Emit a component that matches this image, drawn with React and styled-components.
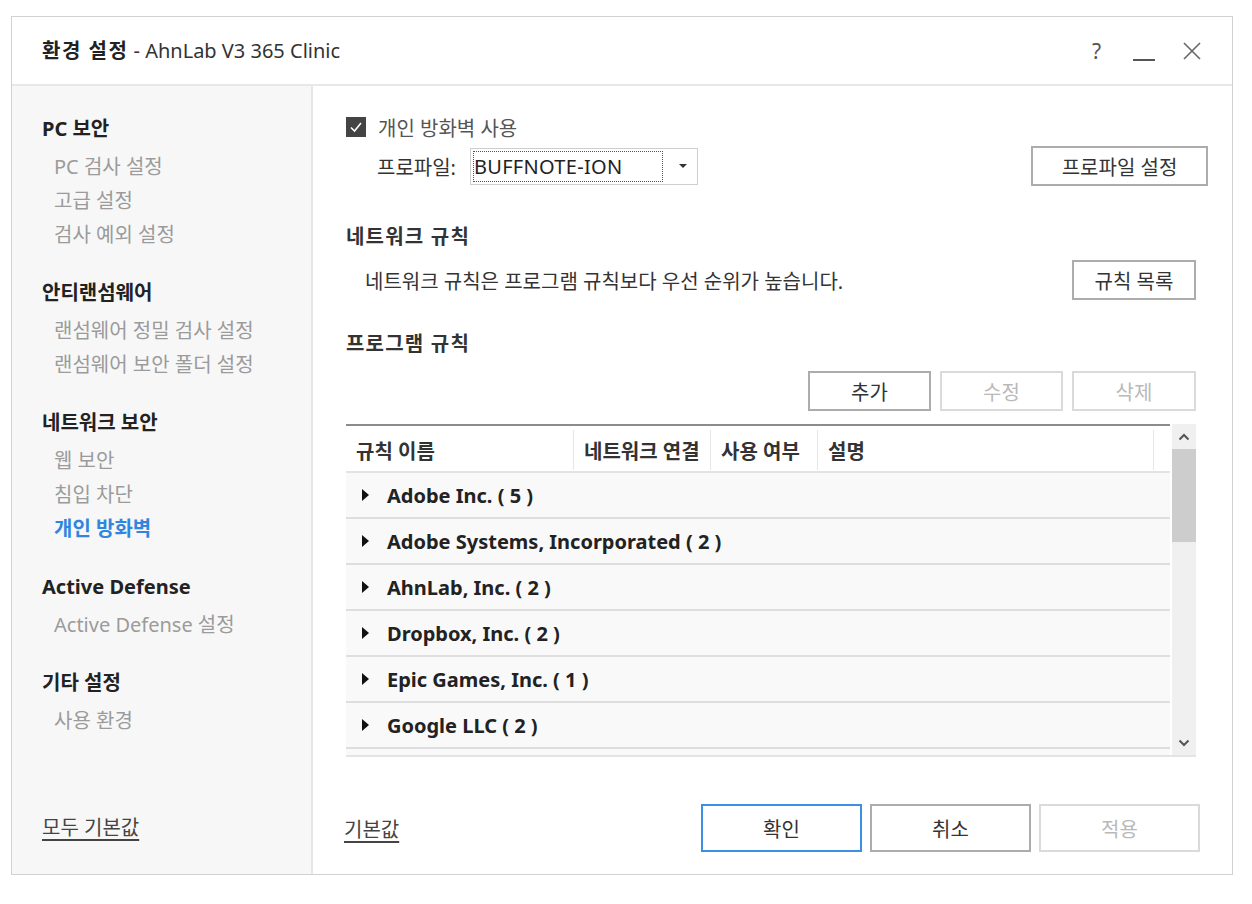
import React from 'react';
import styled, { createGlobalStyle } from 'styled-components';

const GlobalStyle = createGlobalStyle`
  html, body {
    margin: 0;
    padding: 0;
    background: #fff;
  }
  body {
    font-family: "Noto Sans", "Noto Sans CJK KR", sans-serif;
    color: #333;
  }
`;

const menu = [
  { title: 'PC 보안', items: ['PC 검사 설정', '고급 설정', '검사 예외 설정'] },
  { title: '안티랜섬웨어', items: ['랜섬웨어 정밀 검사 설정', '랜섬웨어 보안 폴더 설정'] },
  { title: '네트워크 보안', items: ['웹 보안', '침입 차단', '개인 방화벽'] },
  { title: 'Active Defense', items: ['Active Defense 설정'] },
  { title: '기타 설정', items: ['사용 환경'] },
];

const rules = [
  'Adobe Inc. ( 5 )',
  'Adobe Systems, Incorporated ( 2 )',
  'AhnLab, Inc. ( 2 )',
  'Dropbox, Inc. ( 2 )',
  'Epic Games, Inc. ( 1 )',
  'Google LLC ( 2 )',
];

const columns = [
  { label: '규칙 이름', width: 228 },
  { label: '네트워크 연결', width: 137 },
  { label: '사용 여부', width: 107 },
  { label: '설명', width: 336 },
];

const App = () => (
  <Page>
    <GlobalStyle />
    <Window>
      <TitleBar>
        <Title>
          <strong>환경 설정</strong> - AhnLab V3 365 Clinic
        </Title>
        <TitleControls>
          <HelpMark>?</HelpMark>
          <MinimizeBar />
          <svg width="18" height="18" viewBox="0 0 18 18">
            <path d="M1 1 L17 17 M17 1 L1 17" stroke="#666" strokeWidth="1.6" />
          </svg>
        </TitleControls>
      </TitleBar>

      <Body>
        <Sidebar>
          {menu.map((group) => (
            <MenuGroup key={group.title}>
              <MenuTitle>{group.title}</MenuTitle>
              {group.items.map((item) => (
                <MenuItem key={item} active={item === '개인 방화벽'}>
                  {item}
                </MenuItem>
              ))}
            </MenuGroup>
          ))}
          <SidebarFooter>
            <LinkText>모두 기본값</LinkText>
          </SidebarFooter>
        </Sidebar>

        <Main>
          <CheckRow>
            <CheckBox>
              <svg width="16" height="16" viewBox="0 0 16 16">
                <path d="M3 8.5 L6.5 12 L13 4" stroke="#fff" strokeWidth="1.6" fill="none" />
              </svg>
            </CheckBox>
            <CheckLabel>개인 방화벽 사용</CheckLabel>
          </CheckRow>

          <ProfileRow>
            <ProfileField>
              <FieldLabel>프로파일:</FieldLabel>
              <Select>
                <SelectValue>BUFFNOTE-ION</SelectValue>
                <SelectArrow />
              </Select>
            </ProfileField>
            <Button width={177}>프로파일 설정</Button>
          </ProfileRow>

          <SectionTitle top={36}>네트워크 규칙</SectionTitle>
          <DescRow>
            <Description>네트워크 규칙은 프로그램 규칙보다 우선 순위가 높습니다.</Description>
            <Button width={124}>규칙 목록</Button>
          </DescRow>

          <SectionTitle top={29}>프로그램 규칙</SectionTitle>
          <ActionRow>
            <Button width={123}>추가</Button>
            <Button width={123} disabled>수정</Button>
            <Button width={124} disabled>삭제</Button>
          </ActionRow>

          <Table>
            <ListArea>
              <HeaderRow>
                {columns.map((col) => (
                  <HeaderCell key={col.label} width={col.width}>
                    {col.label}
                  </HeaderCell>
                ))}
              </HeaderRow>
              <Rows>
                {rules.map((rule) => (
                  <RuleRow key={rule}>
                    <Caret />
                    <RuleName>{rule}</RuleName>
                  </RuleRow>
                ))}
                <RuleRow />
              </Rows>
            </ListArea>
            <ScrollBar>
              <ScrollButton>
                <svg width="12" height="8" viewBox="0 0 12 8">
                  <path d="M1.5 6.5 L6 2 L10.5 6.5" stroke="#555" strokeWidth="2" fill="none" />
                </svg>
              </ScrollButton>
              <ScrollTrack>
                <ScrollThumb />
              </ScrollTrack>
              <ScrollButton>
                <svg width="12" height="8" viewBox="0 0 12 8">
                  <path d="M1.5 1.5 L6 6 L10.5 1.5" stroke="#555" strokeWidth="2" fill="none" />
                </svg>
              </ScrollButton>
            </ScrollBar>
          </Table>

          <Footer>
            <LinkText>기본값</LinkText>
            <FooterButtons>
              <Button width={161} height={48} primary>확인</Button>
              <Button width={161} height={48}>취소</Button>
              <Button width={161} height={48} disabled>적용</Button>
            </FooterButtons>
          </Footer>
        </Main>
      </Body>
    </Window>
  </Page>
);

/* window frame */
const Page = styled.div`
  padding: 16px 0 0 11px;
`;

const Window = styled.div`
  width: 1222px;
  height: 859px;
  box-sizing: border-box;
  border: 1px solid #d2d2d2;
  display: flex;
  flex-direction: column;
  background: #fff;
`;

const TitleBar = styled.div`
  height: 69px;
  flex-shrink: 0;
  box-sizing: border-box;
  border-bottom: 2px solid #e8e8e8;
  display: flex;
  align-items: center;
  justify-content: space-between;
  padding: 0 31px 2px 30px;
`;

const Title = styled.div`
  font-size: 20px;
  color: #333;
  strong {
    font-weight: 700;
    color: #222;
    letter-spacing: 1.5px;
  }
`;

const TitleControls = styled.div`
  display: flex;
  align-items: center;
  gap: 28px;
  margin-top: 2px;
`;

const HelpMark = styled.span`
  font-size: 21px;
  color: #555;
  margin-right: 4px;
`;

const MinimizeBar = styled.span`
  width: 22px;
  height: 2px;
  background: #555;
  margin-top: 18px;
`;

const Body = styled.div`
  flex: 1;
  display: flex;
  min-height: 0;
`;

/* left menu */
const Sidebar = styled.div`
  width: 301px;
  flex-shrink: 0;
  box-sizing: border-box;
  background: #f7f7f7;
  border-right: 2px solid #e6e6e6;
  padding: 26px 0 0 30px;
  display: flex;
  flex-direction: column;
`;

const MenuGroup = styled.div`
  display: flex;
  flex-direction: column;
  margin-bottom: 24px;
`;

const MenuTitle = styled.div`
  height: 34px;
  line-height: 34px;
  margin-bottom: 4px;
  font-size: 20px;
  font-weight: 700;
  color: #222;
`;

const MenuItem = styled.div`
  height: 34px;
  line-height: 34px;
  padding-left: 12px;
  font-size: 20px;
  color: ${(p) => (p.active ? '#2f86e0' : '#9b9b9b')};
  font-weight: ${(p) => (p.active ? 700 : 400)};
`;

const SidebarFooter = styled.div`
  margin-top: auto;
  padding-bottom: 33px;
`;

const LinkText = styled.span`
  font-size: 20px;
  color: #444;
  text-decoration: underline;
  text-underline-offset: 4px;
`;

/* right panel */
const Main = styled.div`
  flex: 1;
  display: flex;
  flex-direction: column;
  padding: 29px 36px 22px 33px;
  min-width: 0;
`;

const CheckRow = styled.div`
  display: flex;
  align-items: center;
  height: 24px;
  gap: 12px;
`;

const CheckBox = styled.span`
  width: 20px;
  height: 20px;
  background: #444;
  display: flex;
  align-items: center;
  justify-content: center;
`;

const CheckLabel = styled.span`
  font-size: 20px;
  color: #555;
`;

const ProfileRow = styled.div`
  display: flex;
  align-items: center;
  justify-content: space-between;
  height: 40px;
  margin-top: 7px;
  margin-right: -12px;
`;

const ProfileField = styled.div`
  display: flex;
  align-items: center;
  padding-left: 31px;
  gap: 14px;
`;

const FieldLabel = styled.span`
  font-size: 20px;
  color: #333;
`;

const Select = styled.div`
  width: 228px;
  height: 37px;
  box-sizing: border-box;
  border: 1px solid #cfcfcf;
  display: flex;
  align-items: center;
  padding: 2px;
`;

const SelectValue = styled.div`
  width: 190px;
  height: 100%;
  box-sizing: border-box;
  border: 1px dotted #555;
  display: flex;
  align-items: center;
  font-size: 20px;
  letter-spacing: 0.3px;
  color: #222;
`;

const SelectArrow = styled.span`
  margin-left: 16px;
  width: 0;
  height: 0;
  border-left: 4px solid transparent;
  border-right: 4px solid transparent;
  border-top: 4px solid #333;
`;

const SectionTitle = styled.div`
  margin-top: ${(p) => p.top}px;
  height: 30px;
  line-height: 30px;
  font-size: 20px;
  font-weight: 600;
  letter-spacing: 1.2px;
  color: #333;
`;

const DescRow = styled.div`
  display: flex;
  align-items: center;
  justify-content: space-between;
  margin-top: 8px;
  padding-left: 19px;
`;

const Description = styled.span`
  font-size: 20px;
  color: #333;
`;

const Button = styled.button`
  width: ${(p) => p.width}px;
  height: ${(p) => p.height || 40}px;
  box-sizing: border-box;
  background: #fff;
  font-family: inherit;
  font-size: 20px;
  padding: 0;
  border: 2px solid
    ${(p) => (p.primary ? '#3b8fe4' : p.disabled ? '#dadada' : '#acacac')};
  color: ${(p) => (p.disabled ? '#b9b9b9' : '#333')};
`;

const ActionRow = styled.div`
  display: flex;
  justify-content: flex-end;
  gap: 9px;
  margin-top: 12px;
`;

/* program rule list */
const Table = styled.div`
  margin-top: 13px;
  height: 333px;
  display: flex;
  border-bottom: 2px solid #e4e4e4;
  box-sizing: border-box;
`;

const ListArea = styled.div`
  flex: 1;
  display: flex;
  flex-direction: column;
  border-top: 2px solid #8c8c8c;
  min-width: 0;
`;

const HeaderRow = styled.div`
  height: 47px;
  flex-shrink: 0;
  box-sizing: border-box;
  display: flex;
  border-bottom: 2px solid #e3e3e3;
  background: #fff;
`;

const HeaderCell = styled.div`
  width: ${(p) => p.width}px;
  box-sizing: border-box;
  padding-left: 10px;
  display: flex;
  align-items: center;
  font-size: 20px;
  font-weight: 600;
  color: #333;
  border-right: 1px solid #e6e6e6;
  margin: 4px 0 1px;
`;

const Rows = styled.div`
  flex: 1;
  overflow: hidden;
  background: #f9f9f9;
`;

const RuleRow = styled.div`
  height: 46px;
  box-sizing: border-box;
  border-bottom: 2px solid #dedede;
  display: flex;
  align-items: center;
  padding-left: 16px;
  gap: 18px;
`;

const Caret = styled.span`
  width: 0;
  height: 0;
  border-top: 6px solid transparent;
  border-bottom: 6px solid transparent;
  border-left: 7px solid #111;
`;

const RuleName = styled.span`
  font-size: 20px;
  font-weight: 700;
  color: #222;
`;

const ScrollBar = styled.div`
  width: 24px;
  margin-left: 2px;
  background: #f0f0f0;
  display: flex;
  flex-direction: column;
`;

const ScrollButton = styled.div`
  height: 25px;
  display: flex;
  align-items: center;
  justify-content: center;
`;

const ScrollTrack = styled.div`
  flex: 1;
`;

const ScrollThumb = styled.div`
  height: 93px;
  background: #cdcdcd;
`;

const Footer = styled.div`
  margin-top: auto;
  display: flex;
  align-items: center;
  justify-content: space-between;
  margin-left: -2px;
  margin-right: -4px;
`;

const FooterButtons = styled.div`
  display: flex;
  gap: 8px;
`;

export default App;
